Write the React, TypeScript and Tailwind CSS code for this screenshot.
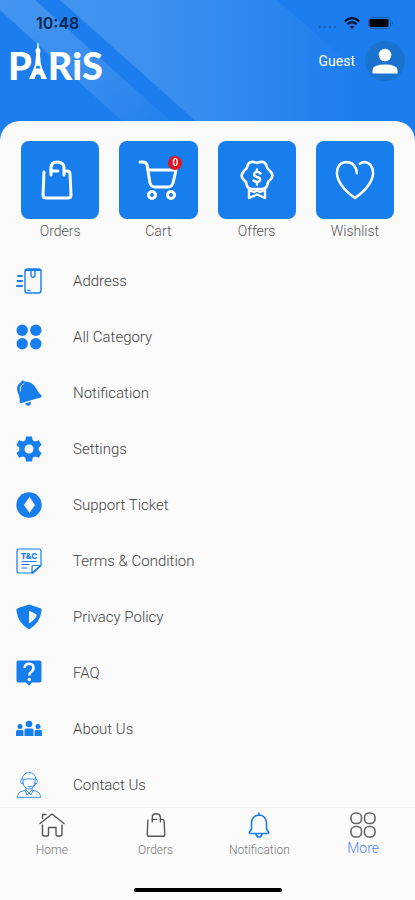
import React from 'react';

type IconProps = { className?: string };

const line = {
  fill: 'none',
  stroke: 'currentColor',
  strokeLinecap: 'round' as const,
  strokeLinejoin: 'round' as const,
};

const BagIcon = ({ className, weight = 3 }: IconProps & { weight?: number }) => (
  <svg viewBox="0 0 32 40" className={className} aria-hidden="true" {...line} strokeWidth={weight}>
    <path d="M3 12 L2 35 Q2 38 5 38 H27 Q30 38 30 35 L29 14 Q29 11 26 11 H24" />
    <path d="M10 15 V8 Q10 2 16 2 Q23 2 23 8 V15" />
    <path d="M10 11 H17" />
  </svg>
);

const CartIcon = ({ className }: IconProps) => (
  <svg viewBox="0 0 40 40" className={className} aria-hidden="true" {...line} strokeWidth={3}>
    <path d="M2 2 H5 Q8 2 9 5 L12 23 Q13 27 17 27 H30 Q34 27 35 23 L38 10 H10" />
    <circle cx="14" cy="35" r="3.5" />
    <circle cx="33" cy="35" r="3.5" />
  </svg>
);

const OffersIcon = ({ className }: IconProps) => (
  <svg viewBox="0 0 34 40" className={className} aria-hidden="true" {...line} strokeWidth={2.6}>
    <path d="M17 3 Q20 1.500 23 2 Q26 3 26.500 6 Q27 9 30 11 Q34 15 31 19 Q28 21 27.500 24 Q27 28 23 29 H11 Q7 28 6.500 24 Q6 21 3 19 Q0 15 4 11 Q7 9 7.500 6 Q8 3 11 2 Q14 1.500 17 3 Z" />
    <path d="M9 29 V38 L17 34.500 L25 38 V29 M9 30 L14 32 L17 30.500 L20 32 L25 30" strokeWidth={2.4} />
    <path d="M20.500 13.500 Q17 10.500 14.500 13 Q13 16 17 17 Q21.500 18 19.500 21 Q17 23 13.500 20.500 M17 9.500 V12 M17 22 V24.500" strokeWidth={2.4} />
  </svg>
);

const HeartIcon = ({ className }: IconProps) => (
  <svg viewBox="0 0 42 42" className={className} aria-hidden="true" {...line} strokeWidth={2.6}>
    <path d="M23 14 Q22 2 11 2 Q2 3 2 14 Q3 27 21 40 Q39 27 40 14 Q40 3 31 2 Q28 2 26 4" />
  </svg>
);

const AddressIcon = ({ className }: IconProps) => (
  <svg viewBox="0 0 26 26" className={className} aria-hidden="true" {...line} strokeWidth={1.4}>
    <rect x="9" y="1" width="16" height="24" rx="2.500" />
    <path d="M9.500 2 H24.500" strokeWidth={2} />
    <path d="M15 3 V8 L17 9.500 L19 8 V3" />
    <path d="M2 8 H6 M1.500 13 H6 M1 18 H6" strokeWidth={2} />
    <path d="M12 22.500 H14" />
  </svg>
);

const CategoryIcon = ({ className }: IconProps) => (
  <svg viewBox="0 0 26 26" className={className} aria-hidden="true" fill="currentColor">
    <circle cx="6.200" cy="6.200" r="5.700" />
    <circle cx="19.800" cy="6.200" r="5.700" />
    <circle cx="6.200" cy="19.800" r="5.700" />
    <circle cx="19.800" cy="19.800" r="5.700" />
  </svg>
);

const BellSolidIcon = ({ className }: IconProps) => (
  <svg viewBox="0 0 26 26" className={className} aria-hidden="true" fill="currentColor">
    <path d="M5 2 Q6.500 -.5 8.500 1.500 Q16 1 20 8 Q22 13 25.500 15.500 Q26 17 24.500 17.500 L5.500 23 Q3.500 23.500 3.500 21.500 Q4.500 18 2 13 Q-1 6 5 2 Z" />
    <path d="M9 23.500 L15 21.800 Q15 25 12.500 25.700 Q10 26 9 23.500 Z" />
    <path d="M8 3.500 Q3 6 4.500 11" fill="none" stroke="#fafafa" strokeWidth="1" strokeLinecap="round" />
  </svg>
);

const SettingsIcon = ({ className }: IconProps) => (
  <svg viewBox="0 0 26 26" className={className} aria-hidden="true" fill="currentColor">
    <path
      fillRule="evenodd"
      d="M10 .5 H16 L16.700 4.200 L19 5.600 L22.800 4.300 L25.600 9 L22.700 11.500 V14.500 L25.600 17 L22.800 21.700 L19 20.400 L16.700 21.800 L16 25.500 H10 L9.300 21.800 L7 20.400 L3.200 21.700 L.4 17 L3.300 14.500 V11.500 L.4 9 L3.200 4.300 L7 5.600 L9.300 4.200 Z M13 8.500 A4.500 4.500 0 1 0 13 17.500 A4.500 4.500 0 1 0 13 8.500 Z"
    />
  </svg>
);

const TicketIcon = ({ className }: IconProps) => (
  <svg viewBox="0 0 26 26" className={className} aria-hidden="true" fill="currentColor">
    <circle cx="13" cy="13" r="12.700" />
    <path d="M13.500 5 L19 13 L13.500 21 L8 13 Z" fill="#fafafa" />
  </svg>
);

const TermsIcon = ({ className }: IconProps) => (
  <svg viewBox="0 0 26 26" className={className} aria-hidden="true" {...line} strokeWidth={1.2}>
    <path d="M3 1 H23 Q25 1 25 3 V17.500 L17 25 H3 Q1 25 1 23 V3 Q1 1 3 1 Z" />
    <path d="M16 25 V19.500 Q16 17.500 18 17.500 H25 Z M17.500 23.500 L23.500 18.500" />
    <path d="M6 13.500 H20 M6 16.500 H13 M6 20 H11" />
    <text x="13" y="10.500" textAnchor="middle" fontFamily="Inter, sans-serif" fontSize="8" fontWeight="800" fill="currentColor" stroke="none">
      T&amp;C
    </text>
  </svg>
);

const PrivacyIcon = ({ className }: IconProps) => (
  <svg viewBox="0 0 26 26" className={className} aria-hidden="true" fill="currentColor">
    <path d="M13 .5 L24.500 4.300 Q26 5 25.500 7 Q24 19 13 25.500 Q2 19 .5 7 Q0 5 1.500 4.300 Z" />
    <path d="M13 6.500 L20.500 10.500 Q21 14 13 19.500 Z" fill="#fafafa" />
  </svg>
);

const FaqIcon = ({ className }: IconProps) => (
  <svg viewBox="0 0 26 26" className={className} aria-hidden="true" fill="currentColor">
    <path d="M2.500 .5 H23.500 Q25.500 .5 25.500 2.500 V20.500 Q25.500 22.500 23.500 22.500 H16 L13 25.700 L10 22.500 H2.500 Q.5 22.500 .5 20.500 V2.500 Q.5 .5 2.500 .5 Z" />
    <path d="M8.500 8 Q9 3.800 13 3.800 Q17.500 4 17.500 8 Q17.500 10.500 15 12 Q13.300 13.300 13.300 15.500" fill="none" stroke="#fafafa" strokeWidth="2.600" />
    <circle cx="13.300" cy="19.500" r="1.700" fill="#fafafa" />
  </svg>
);

const AboutIcon = ({ className }: IconProps) => (
  <svg viewBox="0 0 26 26" className={className} aria-hidden="true" fill="currentColor">
    <circle cx="13" cy="8" r="3.300" />
    <circle cx="4" cy="10.500" r="2.500" />
    <circle cx="22" cy="10.500" r="2.500" />
    <path d="M8.500 20 V14 Q8.500 12.500 10 12.500 H16 Q17.500 12.500 17.500 14 V20 Z" />
    <path d="M0 20 V15.500 Q0 14 1.500 14 H6 Q7.500 14 7.500 15.500 V20 Z" />
    <path d="M18.500 20 V15.500 Q18.500 14 20 14 H24.500 Q26 14 26 15.500 V20 Z" />
  </svg>
);

const ContactIcon = ({ className }: IconProps) => (
  <svg viewBox="0 0 26 26" className={className} aria-hidden="true" {...line} strokeWidth={0.8}>
    <path d="M6 7 Q7 .6 13 .6 Q19 .6 20 7 M6 7 Q4.500 7 4.500 9.500 Q4.500 12 7 12 V6.500 M20 7 Q21.500 7 21.500 9.500 Q21.500 12 19 12 V6.500" />
    <path d="M7 11 Q8 17 13 17 Q18 17 19 11 M7.500 8 Q11 6 16 7 Q18 8 18.500 7 M19.500 12 Q19 14.500 14 14.500 H12" />
    <path d="M10 16 V18 L4 20 Q1.500 21 1.500 25.400 H24.500 Q24.500 21 22 20 L16 18 V16 M10 18 L13 21 L16 18 M9 18.500 L11 23 L13 21 L15 23 L17 18.500" />
  </svg>
);

const HomeIcon = ({ className }: IconProps) => (
  <svg viewBox="0 0 26 26" className={className} aria-hidden="true" {...line} strokeWidth={1.4}>
    <path d="M1 11.500 L13 2 L25 11.500 M3.500 6.500 V2.500 H7" />
    <path d="M3.500 13 V22 Q3.500 24 5.500 24 H8 Q9.500 24 9.500 22.500 V15.500 H17 V22.500 Q17 24 18.500 24 H21 Q23 24 23 22 V13" />
  </svg>
);

const BellIcon = ({ className }: IconProps) => (
  <svg viewBox="0 0 26 26" className={className} aria-hidden="true" {...line} strokeWidth={1.6}>
    <path d="M13 1 V3 M13 3 Q6 3.500 5.500 11 V17 L3.500 20 Q3 21.500 4.500 21.500 H21.500 Q23 21.500 22.500 20 L20.500 17 V11 Q20 3.500 13 3 Z" />
    <path d="M10 22 Q10.500 25 13 25 Q15.500 25 16 22" />
  </svg>
);

const MoreIcon = ({ className }: IconProps) => (
  <svg viewBox="0 0 26 26" className={className} aria-hidden="true" {...line} strokeWidth={1.6}>
    <rect x="1" y="1" width="10.500" height="10.500" rx="4.500" />
    <rect x="14.500" y="1" width="10.500" height="10.500" rx="4.500" />
    <rect x="1" y="14.500" width="10.500" height="10.500" rx="4.500" />
    <rect x="14.500" y="14.500" width="10.500" height="10.500" rx="4.500" />
  </svg>
);

const HeaderStripes = () => (
  <svg viewBox="0 0 415 141" preserveAspectRatio="none" className="absolute inset-0 h-full w-full" aria-hidden="true">
    <defs>
      <linearGradient id="band" x1="0" y1="0" x2="1" y2="1">
        <stop offset="0" stopColor="#4595ef" />
        <stop offset="0.500" stopColor="#388dee" />
        <stop offset="1" stopColor="#1b7dee" />
      </linearGradient>
      <linearGradient id="wide" x1="0" y1="0" x2="1" y2="0">
        <stop offset="0" stopColor="#4394ef" />
        <stop offset="0.400" stopColor="#378dee" />
        <stop offset="0.850" stopColor="#1b7dee" />
        <stop offset="1" stopColor="#1b7dee" />
      </linearGradient>
    </defs>
    <polygon points="0,0 35,0 193,141 144,141 0,10" fill="url(#band)" />
    <polygon points="60,0 277,0 415,121 415,141 218,141" fill="url(#wide)" />
  </svg>
);

const Logo = () => (
  <a href="#" className="flex h-11 items-end font-[Lato,sans-serif] text-[38px] leading-10 font-black text-white">
    <span>P</span>
    <svg viewBox="0 0 20 38" className="-ml-1 mb-[6px] h-9 w-5" aria-hidden="true" fill="currentColor">
      <path
        fillRule="evenodd"
        d="M9.500 0 H10.500 L11 5 L12.500 7 V10 L12 11 L13 22 L14.500 27 L19.500 38 H13.500 Q13 33 10 33 Q7 33 6.500 38 H.5 L5.500 27 L7 22 L8 11 L7.500 10 V7 L9 5 Z M8.500 24 L7.500 27 H12.500 L11.500 24 Z"
      />
    </svg>
    <span>RiS</span>
  </a>
);

const StatusBar = () => (
  <div className="flex h-6 items-center justify-between pr-[21px] pl-9">
    <span className="font-[Inter,sans-serif] text-base leading-6 font-semibold text-[#08264d]">10:48</span>
    <div className="flex items-center gap-2 text-[#04152b]">
      <svg viewBox="0 0 18 4" className="mt-2 h-1 w-[18px]" aria-hidden="true" fill="#1763b8">
        <circle cx="2" cy="2" r="1.300" />
        <circle cx="7" cy="2" r="1.300" />
        <circle cx="12" cy="2" r="1.300" />
        <circle cx="17" cy="2" r="1" />
      </svg>
      <svg viewBox="0 0 16 12" className="h-3 w-4" aria-hidden="true" {...line} strokeWidth={2.2} strokeLinecap="butt">
        <path d="M.8 4.300 Q8 -2 15.200 4.300 M3.500 7.200 Q8 3.200 12.500 7.200" />
        <path d="M8 12 L5.700 9.500 Q8 7.800 10.300 9.500 Z" fill="currentColor" stroke="none" />
      </svg>
      <svg viewBox="0 0 26 12" className="h-3 w-[26px]" aria-hidden="true">
        <rect x=".5" y=".5" width="22" height="11" rx="3" fill="none" stroke="#175fae" />
        <rect x="1.500" y="2" width="19" height="8" rx="1.500" fill="#000" />
        <path d="M24 4 Q26 6 24 8 Z" fill="#175fae" />
      </svg>
    </div>
  </div>
);

const shortcuts = [
  { label: 'Orders', icon: <BagIcon className="box-content h-10 w-8 pr-1.5" /> },
  { label: 'Cart', icon: <CartIcon className="h-10 w-10" />, badge: 0 },
  { label: 'Offers', icon: <OffersIcon className="h-10 w-[34px]" /> },
  { label: 'Wishlist', icon: <HeartIcon className="h-10 w-10" /> },
];

const menu = [
  { label: 'Address', Icon: AddressIcon },
  { label: 'All Category', Icon: CategoryIcon },
  { label: 'Notification', Icon: BellSolidIcon },
  { label: 'Settings', Icon: SettingsIcon },
  { label: 'Support Ticket', Icon: TicketIcon },
  { label: 'Terms & Condition', Icon: TermsIcon },
  { label: 'Privacy Policy', Icon: PrivacyIcon },
  { label: 'FAQ', Icon: FaqIcon },
  { label: 'About Us', Icon: AboutIcon },
  { label: 'Contact Us', Icon: ContactIcon },
];

const BottomNav = () => (
  <nav className="shrink-0 border-t border-[#f2f2f2] bg-[#fbfbfb] pb-2">
    <div className="grid grid-cols-4 text-xs leading-4 text-[#777]">
      <a href="#" className="flex flex-col items-center gap-1 pt-1">
        <HomeIcon className="size-[26px] text-[#555]" />
        Home
      </a>
      <a href="#" className="flex flex-col items-center gap-1 pt-1">
        <BagIcon className="h-[26px] w-5 text-[#555]" weight={2.2} />
        Orders
      </a>
      <a href="#" className="flex flex-col items-center gap-1 pt-1">
        <BellIcon className="size-[26px] text-[#177eed]" />
        Notification
      </a>
      <a href="#" aria-current="page" className="flex flex-col items-center gap-0.5 pt-1 text-sm leading-4 text-[#4f86f0]">
        <MoreIcon className="size-[26px] text-[#666]" />
        More
      </a>
    </div>
    <div className="mx-auto mt-[30px] h-1 w-[148px] rounded-full bg-black" />
  </nav>
);

export default function App() {
  return (
    <div className="flex h-screen flex-col bg-[#fafafa] font-[Roboto,sans-serif] font-light text-[#444]">
      <header className="relative shrink-0 bg-[#1b7dee]">
        <HeaderStripes />
        <div className="relative pt-[11px]">
          <StatusBar />
          <div className="flex h-[86px] items-start justify-between pt-1.5 pr-[10px] pl-2">
            <Logo />
            <button type="button" className="flex items-center gap-[10px] text-sm font-normal text-white">
              Guest
              <span className="grid size-10 place-items-center rounded-full bg-[#1a73cf]">
                <svg viewBox="0 0 26 26" className="size-[26px]" aria-hidden="true" fill="#fff">
                  <circle cx="13" cy="7" r="6.300" />
                  <path d="M.5 25.500 V22 Q1 16.500 13 16.500 Q25 16.500 25.500 22 V25.500 Z" />
                </svg>
              </span>
            </button>
          </div>
        </div>
        <div className="relative h-5 rounded-t-[20px] bg-[#fafafa]" />
      </header>

      <main className="min-h-0 flex-1 overflow-y-auto [scrollbar-width:none]">
        <div className="grid grid-cols-4 gap-5 px-[21px]">
          {shortcuts.map(({ label, icon, badge }) => (
            <a key={label} href="#" className="flex flex-col items-center gap-1 text-sm leading-4 text-[#555]">
              <span className="grid aspect-square w-full place-items-center rounded-lg bg-[#177eed] text-white">
                <span className="relative">
                  {icon}
                  {badge !== undefined && (
                    <span className="absolute -top-1 -right-1 grid size-[14px] place-items-center rounded-full bg-[#dd1520] text-[10px] leading-none font-medium">
                      {badge}
                    </span>
                  )}
                </span>
              </span>
              {label}
            </a>
          ))}
        </div>
        <ul className="mt-[14px]">
          {menu.map(({ label, Icon }) => (
            <li key={label}>
              <a href="#" className="flex h-14 items-center gap-[31px] px-4 text-[15px]">
                <Icon className="size-[26px] text-[#177eed]" />
                {label}
              </a>
            </li>
          ))}
        </ul>
      </main>

      <BottomNav />
    </div>
  );
}
